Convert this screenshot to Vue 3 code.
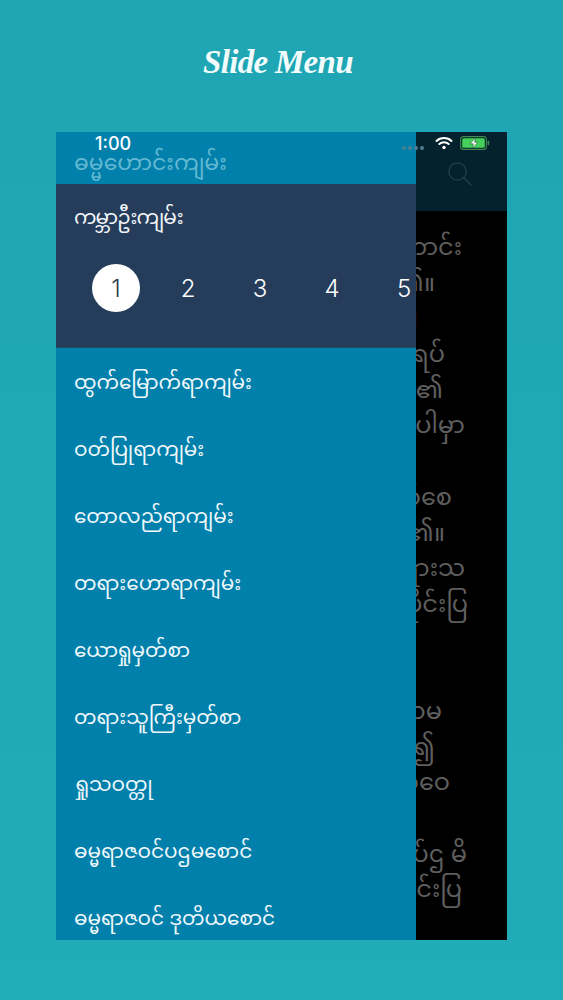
<script setup>
const books = [
  'ထွက်မြောက်ရာကျမ်း',
  'ဝတ်ပြုရာကျမ်း',
  'တောလည်ရာကျမ်း',
  'တရားဟောရာကျမ်း',
  'ယောရှုမှတ်စာ',
  'တရားသူကြီးမှတ်စာ',
  'ရှုသဝတ္တု',
  'ဓမ္မရာဇဝင်ပဌမစောင်',
  'ဓမ္မရာဇဝင် ဒုတိယစောင်',
]
const chapters = [1, 2, 3, 4, 5]
const verseLines = [
  { text: 'ကောင်း', right: 46 },
  { text: 'ပါ၏။', right: 19 },
  { text: '။', right: 2 },
  { text: 'ရပ်', right: 29 },
  { text: 'တွင်၏', right: 27 },
  { text: 'ပါမှာ', right: 49 },
  { text: '', right: 0 },
  { text: 'တော်စေ', right: 36 },
  { text: 'တော်မူ၏။', right: 29 },
  { text: 'ဘုရားသ', right: 49 },
  { text: 'ပိုင်းပြ', right: 52 },
  { text: '', right: 0 },
  { text: '', right: 0 },
  { text: 'တာမ', right: 26 },
  { text: 'ရ၍', right: 19 },
  { text: 'မျှစ်ဝေ', right: 34 },
  { text: '', right: 0 },
  { text: 'ပြပ်ဌ မိ', right: 51 },
  { text: 'ပျင်းပြ', right: 46 },
]
</script>

<template>
  <div class="page">
    <h1 class="title">Slide Menu</h1>
    <div class="phone">
      <aside class="drawer">
        <div class="drawer-head">ဓမ္မဟောင်းကျမ်း</div>
        <section class="current">
          <div class="current-name">ကမ္ဘာဦးကျမ်း</div>
          <div class="chapters">
            <span
              v-for="n in chapters"
              :key="n"
              class="chapter"
              :class="{ active: n === 1 }"
            >{{ n }}</span>
          </div>
        </section>
        <ul class="books">
          <li v-for="b in books" :key="b" class="book">{{ b }}</li>
        </ul>
      </aside>
      <div class="reader">
        <div class="reader-bar">
          <svg class="search" viewBox="0 0 26 26" width="26" height="26" fill="none" stroke="#21404b" stroke-width="1.3">
            <circle cx="10.5" cy="10.5" r="8.7" />
            <path d="M16.8 16.8 L24 24" stroke-linecap="round" />
          </svg>
        </div>
        <div class="verses">
          <div
            v-for="(l, i) in verseLines"
            :key="i"
            class="verse"
            :style="{ width: l.right + 'px' }"
          ><span class="verse-text">{{ l.text }}</span></div>
        </div>
      </div>
      <div class="status">
        <span class="time">1:00</span>
        <div class="status-right">
          <span class="dots"><i></i><i></i><i></i><i></i></span>
          <svg class="wifi" viewBox="0 0 18 14" width="18" height="14" fill="none" stroke="#fff" stroke-linecap="round">
            <path d="M1.5 5 C5.5 1 12.5 1 16.5 5" stroke-width="2" />
            <path d="M4.3 8 C6.8 5.6 11.2 5.6 13.7 8" stroke-width="2" />
            <circle cx="9" cy="11.5" r="1.7" fill="#fff" stroke="none" />
          </svg>
          <svg class="battery" viewBox="0 0 30 14" width="30" height="14">
            <rect x="0.6" y="0.6" width="25.8" height="12.8" rx="3" fill="none" stroke="#3f8a4c" stroke-width="1.1" />
            <rect x="2.2" y="2.2" width="22.6" height="9.6" rx="1.6" fill="#45d05a" />
            <rect x="27.6" y="4.8" width="1.6" height="4.4" rx="0.8" fill="#3f8a4c" />
            <path d="M15.6 1.8 L10 7.8 H13.4 L12.4 12.2 L18 6.2 H14.6 Z" fill="#fff" stroke="#0c3a22" stroke-width="0.5" />
          </svg>
        </div>
      </div>
    </div>
  </div>
</template>

<style scoped>
.page {
  width: 563px;
  height: 1000px;
  box-sizing: border-box;
  padding-top: 132px;
  padding-left: 56px;
  position: relative;
  background: linear-gradient(180deg, #1fa5b3 0%, #20acb8 100%);
  font-family: "Noto Sans", "Noto Sans Myanmar", "Liberation Sans", sans-serif;
  overflow: hidden;
}
.title {
  position: absolute;
  top: 40px;
  left: 0;
  width: 100%;
  box-sizing: border-box;
  padding-right: 7px;
  margin: 0;
  text-align: center;
  color: #f2fcfc;
  font-family: "Liberation Serif", serif;
  font-style: italic;
  font-weight: 700;
  font-size: 33px;
  letter-spacing: -0.7px;
  line-height: 44px;
}
.phone {
  width: 451px;
  height: 808px;
  display: flex;
  position: relative;
  background: #000;
  overflow: hidden;
}
.drawer {
  width: 360px;
  flex: none;
  display: flex;
  flex-direction: column;
  background: #0080ab;
  color: #fff;
  overflow: hidden;
}
.drawer-head {
  height: 52px;
  flex: none;
  box-sizing: border-box;
  padding: 12px 0 0 18px;
  font-size: 22px;
  line-height: 34px;
  color: #63b9d3;
  white-space: nowrap;
}
.current {
  height: 164px;
  flex: none;
  background: #253d5b;
  border-bottom: 1px solid #1f4a68;
  box-sizing: border-box;
  padding: 16px 0 0 18px;
}
.current-name {
  font-size: 20px;
  line-height: 34px;
  letter-spacing: -0.9px;
  color: #f4f7fa;
}
.chapters {
  display: flex;
  margin: 30px 0 0 18px;
}
.chapter {
  width: 48px;
  height: 48px;
  margin: 0 24px 0 0;
  flex: none;
  border-radius: 50%;
  display: flex;
  align-items: center;
  justify-content: center;
  font-family: Inter, "Liberation Sans", sans-serif;
  font-weight: 300;
  font-size: 24px;
  color: #fff;
}
.chapter.active {
  background: #fff;
  color: #2b3a4a;
}
.books {
  list-style: none;
  margin: 0;
  padding: 0 0 0 18px;
}
.book {
  height: 67px;
  font-size: 20px;
  line-height: 67px;
  color: #f0f8fb;
  white-space: nowrap;
}
.reader {
  flex: 1;
  min-width: 0;
  display: flex;
  flex-direction: column;
  overflow: hidden;
}
.reader-bar {
  height: 79px;
  flex: none;
  background: #03222e;
  box-sizing: border-box;
  padding: 29px 0 0 31px;
}
.search {
  display: block;
}
.verses {
  padding-top: 17px;
  color: #5f5f5f;
  font-size: 24px;
  line-height: 35.7px;
  white-space: nowrap;
}
.verse {
  height: 35.7px;
  display: flex;
  justify-content: flex-end;
}
.verse-text {
  flex: none;
}
.status {
  position: absolute;
  top: 0;
  left: 0;
  right: 0;
  height: 22px;
  display: flex;
  justify-content: space-between;
  align-items: center;
  color: #fff;
}
.time {
  margin: 0 0 0 39px;
  padding-top: 1px;
  font-family: Inter, "Liberation Sans", sans-serif;
  font-size: 18px;
  font-weight: 500;
}
.status-right {
  display: flex;
  align-items: center;
  margin-right: 17px;
  gap: 7px;
}
.dots {
  display: flex;
  gap: 2px;
  margin: 9px 4px 0 0;
}
.dots i {
  width: 4px;
  height: 4px;
  border-radius: 50%;
  background: #4d7f92;
}
.wifi,
.battery {
  display: block;
}
</style>

<style>
html, body { margin: 0; padding: 0; }
</style>
